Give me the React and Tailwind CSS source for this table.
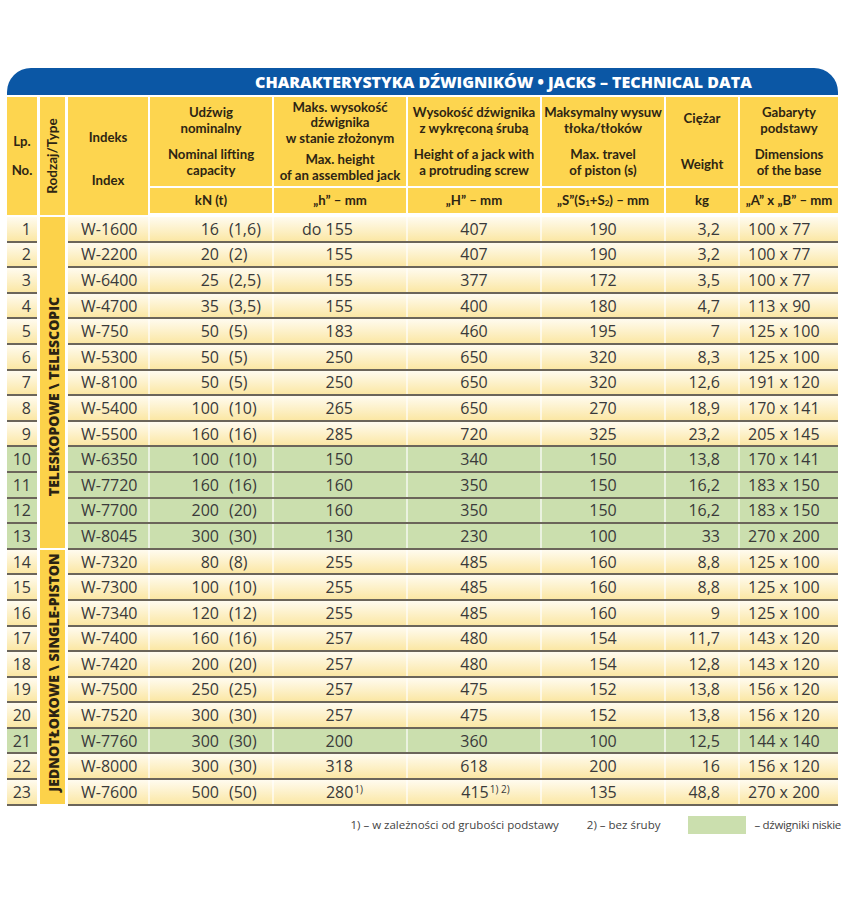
const rows = [
  ["1", "W-1600", "16", "(1,6)", "do 155", "407", "190", "3,2", "100 x 77"],
  ["2", "W-2200", "20", "(2)", "155", "407", "190", "3,2", "100 x 77"],
  ["3", "W-6400", "25", "(2,5)", "155", "377", "172", "3,5", "100 x 77"],
  ["4", "W-4700", "35", "(3,5)", "155", "400", "180", "4,7", "113 x 90"],
  ["5", "W-750", "50", "(5)", "183", "460", "195", "7", "125 x 100"],
  ["6", "W-5300", "50", "(5)", "250", "650", "320", "8,3", "125 x 100"],
  ["7", "W-8100", "50", "(5)", "250", "650", "320", "12,6", "191 x 120"],
  ["8", "W-5400", "100", "(10)", "265", "650", "270", "18,9", "170 x 141"],
  ["9", "W-5500", "160", "(16)", "285", "720", "325", "23,2", "205 x 145"],
  ["10", "W-6350", "100", "(10)", "150", "340", "150", "13,8", "170 x 141", true],
  ["11", "W-7720", "160", "(16)", "160", "350", "150", "16,2", "183 x 150", true],
  ["12", "W-7700", "200", "(20)", "160", "350", "150", "16,2", "183 x 150", true],
  ["13", "W-8045", "300", "(30)", "130", "230", "100", "33", "270 x 200", true],
  ["14", "W-7320", "80", "(8)", "255", "485", "160", "8,8", "125 x 100"],
  ["15", "W-7300", "100", "(10)", "255", "485", "160", "8,8", "125 x 100"],
  ["16", "W-7340", "120", "(12)", "255", "485", "160", "9", "125 x 100"],
  ["17", "W-7400", "160", "(16)", "257", "480", "154", "11,7", "143 x 120"],
  ["18", "W-7420", "200", "(20)", "257", "480", "154", "12,8", "143 x 120"],
  ["19", "W-7500", "250", "(25)", "257", "475", "152", "13,8", "156 x 120"],
  ["20", "W-7520", "300", "(30)", "257", "475", "152", "13,8", "156 x 120"],
  ["21", "W-7760", "300", "(30)", "200", "360", "100", "12,5", "144 x 140", true],
  ["22", "W-8000", "300", "(30)", "318", "618", "200", "16", "156 x 120"],
  ["23", "W-7600", "500", "(50)", "280", "415", "135", "48,8", "270 x 200"],
];

// footnote marks only on the last row
const notes = { "23": ["1)", "1) 2)"] };

const rowBg = (green) =>
  green
    ? "bg-[#cbdfae]"
    : "bg-gradient-to-b from-[#fffbef] to-[#fbe7a4]";

const head = "font-['Lato',sans-serif] font-bold text-[13.2px] leading-[15.5px] text-[#2e2513] text-center";

export default function App() {
  return (
    <div className="min-h-[900px] w-[846px] bg-white pt-[68px] pl-[7px] font-['Open_Sans',sans-serif]">
      <div className="w-[831px]">
        {/* title bar */}
        <div className="flex h-[27px] items-center rounded-t-[24px] bg-[#0b57a5] pl-[248px]">
          <span className="whitespace-nowrap text-[16px] font-extrabold text-white">
            CHARAKTERYSTYKA DŹWIGNIKÓW • JACKS – TECHNICAL DATA
          </span>
        </div>

        {/* column headers */}
        <div className="mt-[2px] grid grid-cols-[30px_25px_770px] gap-x-[3px]">
          <div className={`${head} flex h-[118px] flex-col items-center justify-center gap-[14px] bg-[#fdd54f]`}>
            <span>Lp.</span>
            <span>No.</span>
          </div>
          <div className={`${head} relative h-[118px] bg-[#fdd54f]`}>
            <span className="absolute left-1/2 top-1/2 -translate-x-1/2 -translate-y-1/2 -rotate-90 whitespace-nowrap text-[13.5px]">
              Rodzaj/Type
            </span>
          </div>
          <div className="flex h-[118px]">
            <div className={`${head} flex w-[82px] flex-col items-center justify-center gap-[27px] border-r-2 border-white bg-[#fdd54f] pt-[6px]`}>
              <span>Indeks</span>
              <span>Index</span>
            </div>
            <div className="flex flex-1 flex-col">
              <div className="flex h-[91px] border-b-2 border-white">
                <div className={`${head} flex w-[124px] flex-col items-center justify-center gap-[11px] border-r-2 border-white bg-[#fdd54f]`}>
                  <span>Udźwig<br />nominalny</span>
                  <span>Nominal lifting<br />capacity</span>
                </div>
                <div className={`${head} flex w-[134px] flex-col items-center justify-center gap-[6px] border-r-2 border-white bg-[#fdd54f]`}>
                  <span>Maks. wysokość<br />dźwignika<br />w stanie złożonym</span>
                  <span>Max. height<br />of an assembled jack</span>
                </div>
                <div className={`${head} flex w-[134px] flex-col items-center justify-center gap-[11px] border-r-2 border-white bg-[#fdd54f]`}>
                  <span>Wysokość dźwignika<br />z wykręconą śrubą</span>
                  <span>Height of a jack with<br />a protruding screw</span>
                </div>
                <div className={`${head} flex w-[124px] flex-col items-center justify-center gap-[11px] border-r-2 border-white bg-[#fdd54f]`}>
                  <span>Maksymalny wysuw<br />tłoka/tłoków</span>
                  <span>Max. travel<br />of piston (s)</span>
                </div>
                <div className={`${head} flex w-[74px] flex-col items-center justify-center gap-[30px] border-r-2 border-white bg-[#fdd54f]`}>
                  <span>Ciężar</span>
                  <span>Weight</span>
                </div>
                <div className={`${head} flex flex-1 flex-col items-center justify-center gap-[11px] bg-[#fdd54f]`}>
                  <span>Gabaryty<br />podstawy</span>
                  <span>Dimensions<br />of the base</span>
                </div>
              </div>
              <div className={`${head} flex h-[25px]`}>
                <div className="flex w-[124px] items-center justify-center border-r-2 border-white bg-[#fdd54f]">kN (t)</div>
                <div className="flex w-[134px] items-center justify-center border-r-2 border-white bg-[#fdd54f]">„h” – mm</div>
                <div className="flex w-[134px] items-center justify-center border-r-2 border-white bg-[#fdd54f]">„H” – mm</div>
                <div className="flex w-[124px] items-center justify-center border-r-2 border-white bg-[#fdd54f]">
                  „S”(S<sub className="text-[8px]">1</sub>+S<sub className="text-[8px]">2</sub>) – mm
                </div>
                <div className="flex w-[74px] items-center justify-center border-r-2 border-white bg-[#fdd54f]">kg</div>
                <div className="flex flex-1 items-center justify-center bg-[#fdd54f]">„A” x „B” – mm</div>
              </div>
            </div>
          </div>
        </div>

        {/* body */}
        <div className="mt-[2px] grid grid-cols-[30px_25px_770px] gap-x-[3px] text-[16px] text-[#3a3a3a]">
          <div className="flex flex-col">
            {rows.map((r) => (
              <div
                key={r[0]}
                className={`flex h-[25.6px] items-center justify-end border-b-2 border-[#6b655a] pr-[6px] ${rowBg(r[9])}`}
              >
                {r[0]}
              </div>
            ))}
          </div>
          <div className="flex flex-col text-[14px] font-extrabold text-[#2b2313]">
            <div className="mb-[2px] flex h-[330.8px] items-center justify-center bg-[#fcd24a] pt-[28px]">
              <span className="block w-[300px] shrink-0 -rotate-90 whitespace-nowrap text-center">TELESKOPOWE \ TELESCOPIC</span>
            </div>
            <div className="flex h-[254px] items-center justify-center bg-[#fcd24a] pb-[8px]">
              <span className="block w-[250px] shrink-0 -rotate-90 whitespace-nowrap text-center">JEDNOTŁOKOWE \ SINGLE-PISTON</span>
            </div>
          </div>
          <div className="flex flex-col">
            {rows.map((r) => {
              const n = notes[r[0]];
              return (
                <div
                  key={r[0]}
                  className={`flex h-[25.6px] items-center border-b-2 border-[#6b655a] ${rowBg(r[9])}`}
                >
                  <div className="flex h-full w-[82px] items-center border-r-2 border-white/60 pl-[13px]">{r[1]}</div>
                  <div className="flex h-full w-[124px] items-center border-r-2 border-white/60">
                    <span className="w-[69px] text-right">{r[2]}</span>
                    <span className="pl-[10px]">{r[3]}</span>
                  </div>
                  <div className="flex h-full w-[134px] items-center justify-end border-r-2 border-white/60 pr-[53px]">
                    <span>
                      {r[4]}
                      {n && <sup className="mr-[-10px] pl-[1px] text-[10px]">{n[0]}</sup>}
                    </span>
                  </div>
                  <div className="flex h-full w-[134px] items-center justify-center border-r-2 border-white/60">
                    <span>
                      {r[5]}
                      {n && <sup className="mr-[-23px] whitespace-nowrap pl-[1px] text-[10px]">{n[1]}</sup>}
                    </span>
                  </div>
                  <div className="flex h-full w-[124px] items-center justify-center border-r-2 border-white/60">{r[6]}</div>
                  <div className="flex h-full w-[74px] items-center justify-end border-r-2 border-white/60 pr-[18px]">{r[7]}</div>
                  <div className="flex h-full flex-1 items-center pl-[8px]">{r[8]}</div>
                </div>
              );
            })}
          </div>
        </div>

        {/* legend */}
        <div className="mt-[9px] flex h-[20px] items-center justify-end text-[11.5px] text-[#444]">
          <span>1) – w zależności od grubości podstawy</span>
          <span className="ml-[28px]">2) – bez śruby</span>
          <div className="ml-[28px] h-[18px] w-[58px] shrink-0 bg-[#cbdfae]" />
          <span className="ml-[8px] mr-[-3px] tracking-[-0.3px]">– dźwigniki niskie</span>
        </div>
      </div>
    </div>
  );
}
